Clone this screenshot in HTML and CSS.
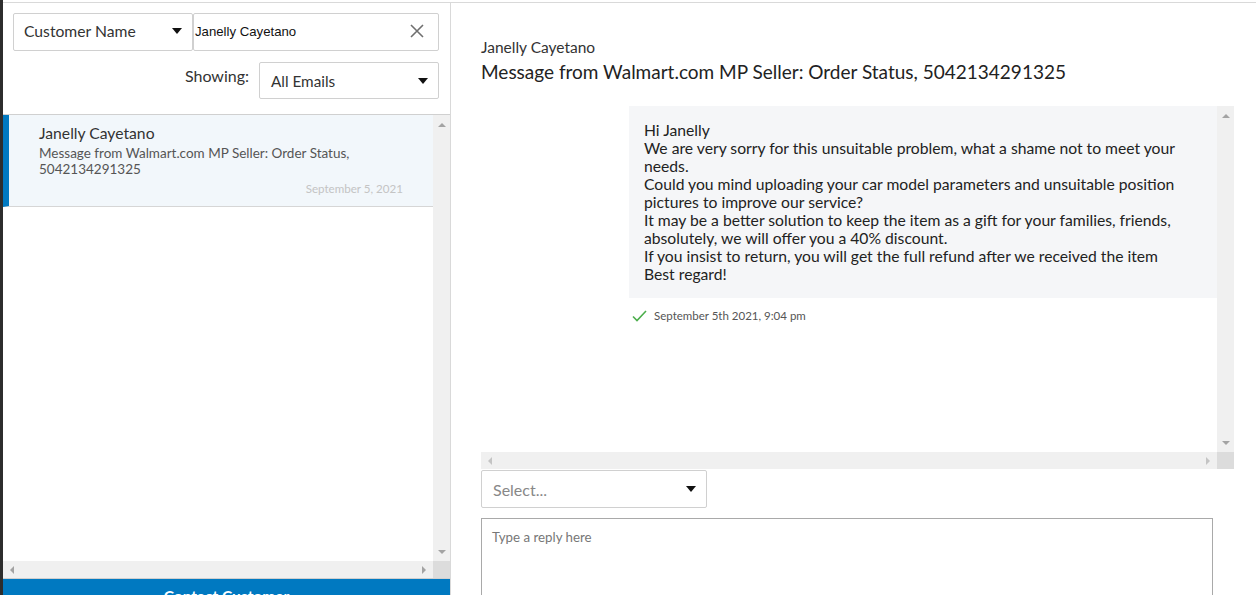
FILE: index.html
```html
<!DOCTYPE html>
<html>
<head>
<meta charset="utf-8">
<link rel="stylesheet" href="styles.css">
</head>
<body>
<div class="app">
  <div class="strip"></div>
  <div class="panels">
    <aside class="left">
      <div class="filters">
        <div class="filter-row">
          <div class="select sel-field"><span>Customer Name</span><i class="caret"></i></div>
          <div class="search"><span>Janelly Cayetano</span>
            <svg class="clear" width="16" height="16" viewBox="0 0 16 16"><path d="M2 2L14 14M14 2L2 14" stroke="#6f6f6f" stroke-width="1.6" fill="none"/></svg>
          </div>
        </div>
        <div class="show-row">
          <span class="show-label">Showing:</span>
          <div class="select sel-show"><span>All Emails</span><i class="caret"></i></div>
        </div>
      </div>
      <div class="list">
        <div class="list-main">
          <div class="list-content">
            <div class="item active">
              <div class="item-name">Janelly Cayetano</div>
              <div class="item-subj">Message from Walmart.com MP Seller: Order Status, 5042134291325</div>
              <div class="item-date">September 5, 2021</div>
            </div>
          </div>
          <div class="vscroll">
            <svg width="8" height="5" viewBox="0 0 8 5"><path d="M0 5L4 1L8 5Z" fill="#a3a3a3"/></svg>
            <svg width="8" height="5" viewBox="0 0 8 5"><path d="M0 0L8 0L4 4Z" fill="#a3a3a3"/></svg>
          </div>
        </div>
        <div class="hscroll">
          <div class="htrack">
            <svg width="5" height="8" viewBox="0 0 5 8"><path d="M5 0L5 8L1 4Z" fill="#a3a3a3"/></svg>
            <svg width="5" height="8" viewBox="0 0 5 8"><path d="M0 0L4 4L0 8Z" fill="#a3a3a3"/></svg>
          </div>
          <div class="corner"></div>
        </div>
      </div>
      <div class="contact" role="button">Contact Customer</div>
    </aside>
    <main class="right">
      <div class="head-name">Janelly Cayetano</div>
      <h1 class="head-title">Message from Walmart.com MP Seller: Order Status, 5042134291325</h1>
      <div class="thread">
        <div class="thread-main">
          <div class="thread-content">
            <div class="bubble">Hi Janelly<br>We are very sorry for this unsuitable problem, what a shame not to meet your<br>needs.<br>Could you mind uploading your car model parameters and unsuitable position<br>pictures to improve our service?<br>It may be a better solution to keep the item as a gift for your families, friends,<br>absolutely, we will offer you a 40% discount.<br>If you insist to return, you will get the full refund after we received the item<br>Best regard!</div>
            <div class="stamp">
              <svg width="15" height="12" viewBox="0 0 15 12"><path d="M1 6.5L5 10.5L14 1" stroke="#4cae4c" stroke-width="1.6" fill="none"/></svg>
              <span>September 5th 2021, 9:04 pm</span>
            </div>
          </div>
          <div class="vscroll">
            <svg width="8" height="5" viewBox="0 0 8 5"><path d="M0 5L4 1L8 5Z" fill="#a3a3a3"/></svg>
            <svg width="8" height="5" viewBox="0 0 8 5"><path d="M0 0L8 0L4 4Z" fill="#a3a3a3"/></svg>
          </div>
        </div>
        <div class="hscroll">
          <div class="htrack">
            <svg width="5" height="8" viewBox="0 0 5 8"><path d="M5 0L5 8L1 4Z" fill="#c4c4c4"/></svg>
            <svg width="5" height="8" viewBox="0 0 5 8"><path d="M0 0L4 4L0 8Z" fill="#c4c4c4"/></svg>
          </div>
          <div class="corner"></div>
        </div>
      </div>
      <div class="select sel-template"><span>Select...</span><i class="caret"></i></div>
      <div class="reply">Type a reply here</div>
    </main>
  </div>
</div>
</body>
</html>
```

FILE: styles.css
```css
* { box-sizing: border-box; }
html, body { margin: 0; padding: 0; height: 595px; overflow: hidden; background: #fff; }
body { font-family: Lato, "Open Sans", sans-serif; color: #333; }

.app { display: flex; height: 595px; overflow: hidden; }
.strip { width: 3px; background: #2d2d2d; flex: none; }
.panels { flex: 1; display: flex; margin-top: 2px; border-top: 1px solid #d9d9d9; min-width: 0; align-items: flex-start; }

/* left */
.left { width: 448px; flex: none; border-right: 1px solid #d9d9d9; display: flex; flex-direction: column; height: 640px; }
.filters { padding: 10px 11px 0 10px; flex: none; }
.filter-row { display: flex; height: 38px; }
.select { display: flex; align-items: center; justify-content: space-between; border: 1px solid #d0d0d0; border-radius: 2px; background: #fff; font-size: 15.7px; color: #333; padding: 0 10px 0 10px; flex: none; }
.caret { width: 0; height: 0; border-left: 5px solid transparent; border-right: 5px solid transparent; border-top: 6px solid #111; }
.sel-field { width: 180px; height: 38px; padding-bottom: 2px; }
.search { flex: 1; height: 38px; border: 1px solid #d0d0d0; border-radius: 2px; display: flex; align-items: center; justify-content: space-between; padding: 0 13px 2px 1px; font-family: "Liberation Sans", Arial, sans-serif; font-size: 13.2px; color: #111; }
.clear { display: block; }
.show-row { display: flex; justify-content: flex-end; align-items: flex-start; margin-top: 11px; height: 37px; }
.show-label { font-size: 16px; color: #333; margin-right: 10px; margin-top: 4px; }
.sel-show { width: 180px; height: 37px; font-size: 15.3px; padding-left: 11px; }

.list { margin-top: 15px; border-top: 1px solid #d0d0d0; height: 464px; flex: none; display: flex; flex-direction: column; }
.list-main { flex: 1; display: flex; min-height: 0; }
.list-content { flex: 1; }
.item { height: 92px; border-bottom: 1px solid #d6d6d6; background: #f2f7fb; border-left: 6px solid #0079c1; padding: 9px 30px 0 30px; }
.item-name { font-size: 15.7px; line-height: 18px; color: #333; }
.item-subj { font-size: 13.5px; line-height: 16px; color: #555; margin-top: 3px; width: 340px; }
.item-date { font-size: 11.6px; line-height: 14px; color: #c4c4c4; text-align: right; margin-top: 5px; }

.vscroll { width: 17px; flex: none; background: #f0f0f0; display: flex; flex-direction: column; justify-content: space-between; align-items: center; padding: 7px 0 6px; }
.vscroll svg, .htrack svg { display: block; }
.hscroll { height: 17px; flex: none; display: flex; }
.htrack { flex: 1; background: #f0f0f0; display: flex; justify-content: space-between; align-items: center; padding: 0 6px; }
.corner { width: 17px; background: #dcdcdc; flex: none; }

.contact { height: 40px; flex: none; border-top: 1px solid #cfcfcf; background: #0079c1; color: #fff; font-size: 15.5px; font-weight: bold; padding-top: 7px; text-align: center; line-height: 20px; cursor: pointer; }

/* right */
.right { flex: 1; padding: 35px 22px 0 30px; display: flex; flex-direction: column; min-width: 0; }
.head-name { font-size: 15.5px; line-height: 18px; color: #333; }
.head-title { font-size: 19px; line-height: 24px; font-weight: normal; color: #222; margin: 4px 0 0; }
.thread { margin-top: 22px; height: 363px; display: flex; flex-direction: column; flex: none; }
.thread-main { flex: 1; display: flex; min-height: 0; }
.thread-content { flex: 1; }
.bubble { margin-left: 148px; background: #f5f6f8; padding: 15px 15px 15px; font-size: 15.7px; line-height: 18px; color: #222; white-space: nowrap; }
.stamp { display: flex; align-items: center; margin: 11px 0 0 151px; font-size: 11.5px; color: #555; }
.stamp svg { margin-right: 7px; }

.sel-template { width: 226px; height: 38px; margin-top: 1px; color: #888; font-size: 16px; padding-left: 11px; }
.reply { width: 732px; height: 120px; margin-top: 10px; border: 1px solid #a9a9a9; padding: 10px 10px; font-size: 13.3px; color: #777; flex: none; }
```
